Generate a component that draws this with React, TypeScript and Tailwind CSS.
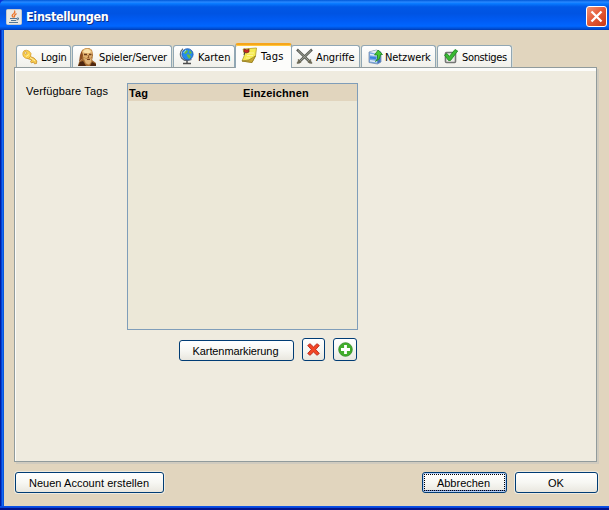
import React from 'react';

const ui = "font-['DejaVu_Sans_Condensed','DejaVu_Sans',sans-serif]";

function KeyIcon() {
  return (
    <svg width="16" height="16" viewBox="0 0 16 16">
      <path d="M7 7L12 9 14.800 12 14.500 14.500 12.500 14.800 11.500 13 9.500 14 8.500 12.500 9.800 11 5.500 9.500Z" fill="#f7cb4e" stroke="#c98f28" strokeWidth=".8" />
      <path d="M1 3.500Q1.500 1 4.500 1.200 7.500 1.500 9 4.500 9.300 8 6.500 9.500 3.500 10 1.500 7.500 .5 5.500 1 3.500Z" fill="#fcd250" stroke="#d49c2e" strokeWidth=".8" />
      <circle cx="3.700" cy="4" r="1.100" fill="#fff" stroke="#ba8626" strokeWidth=".6" />
      <path d="M4 7.500l3-2M8 8.500l5 3.300" stroke="#fff1a3" strokeWidth=".9" />
    </svg>
  );
}

function FaceIcon() {
  return (
    <svg width="18" height="18" viewBox="0 0 18 18">
      <path d="M0 18L1 14 4 11 3 6 4 2 8 0H11L14 2 15 7 14 12 18 15V18Z" fill="#a2672b" />
      <path d="M4 4Q5 0 9 .3 14 0 14.500 5L13 12 9 14 5 11Z" fill="#e1b16e" />
      <path d="M5 4Q6 1 10 1L13 3 12 5H7Z" fill="#fae1a7" />
      <path d="M6 6.500h3M11 6.500h2.500" stroke="#6a3a1a" strokeWidth="1.300" />
      <path d="M10 7l1 2.500H9.500" fill="none" stroke="#8c5226" />
      <path d="M5 9l3 1.500h4L14 9l-.5 5L11 17 7.500 15.500Z" fill="#e0b479" stroke="#ad7638" strokeWidth=".6" />
      <path d="M9 11.500h3" stroke="#74401d" />
      <path d="M3.500 3L5 7l-1 4-3 3 1-7Z" fill="#8b4b1e" />
      <path d="M0 18l2-4 3-1 3 5ZM12 18l2-4 4 2v2Z" fill="#4d260f" />
    </svg>
  );
}

function GlobeIcon() {
  return (
    <svg width="16" height="17" viewBox="0 0 16 17">
      <path d="M4 .8Q-.5 5 2.500 10 6 14 12.500 11.500" fill="none" stroke="#626b73" strokeWidth="1.200" />
      <path d="M8 12.500v2.500M4 15.500h8" stroke="#4d4d4d" strokeWidth="1.500" />
      <circle cx="8.500" cy="6.300" r="5.600" fill="#248bee" stroke="#1b50a8" strokeWidth=".8" />
      <path d="M6 3l2-1 1 1-1 2-2 1-1-1ZM8 6l3 1 1 2-2 2-2-3ZM11 2l2 3-2 1-1-2Z" fill="#65b94a" />
      <path d="M4.500 5L7 2" stroke="#8cd0ff" />
    </svg>
  );
}

function NoteIcon() {
  return (
    <svg width="17" height="17" viewBox="0 0 17 17">
      <path d="M2 2L15.500 1 14.500 9 11 15.500 1 14 3.500 8Z" fill="#f5eb51" stroke="#b19a29" strokeWidth=".8" />
      <path d="M1 14Q8 14.500 14.500 9L11 15.500Z" fill="#c9aa33" stroke="#8e7621" strokeWidth=".7" />
      <path d="M7 6h6M6 8.500h6M5 11h4" stroke="#fff59a" />
      <path d="M3 2l3 1 2-1v3l-3 1-2-1Z" fill="#ce2823" stroke="#701c1c" strokeWidth=".7" />
      <path d="M4 5l-1 3" stroke="#4a4a34" />
    </svg>
  );
}

function SwordsIcon() {
  return (
    <svg width="17" height="17" viewBox="0 0 17 17">
      <path d="M1 1.500L15 15M16 1.500L2 15" stroke="#5c5e58" strokeWidth="2.500" />
      <path d="M2 2.500L13 13M15 2.500L4 13" stroke="#a7ab9e" strokeWidth=".9" />
      <path d="M2 11.500l3 3M12 14.500l3-3M1 15.500l2-2M14 13.500l2 2" stroke="#716d57" strokeWidth="1.500" />
    </svg>
  );
}

function NetworkIcon() {
  return (
    <svg width="15" height="16" viewBox="0 0 15 16">
      <path d="M1 3L8.500 1 13 3V13L9.500 15 1 13.500Z" fill="#78a7e3" stroke="#7990ae" strokeWidth=".8" />
      <path d="M1.500 3L8.500 1.300 12.500 3 9 5Z" fill="#e6edf1" />
      <path d="M9.500 5l3-2v10l-3 1.500Z" fill="#416fb7" />
      <path d="M2 5.500l7 1M2 11.800l7 1" stroke="#e0ecfa" strokeWidth="1.500" />
      <path d="M2 8.500l6 .7" stroke="#3881df" strokeWidth="2" />
      <path d="M7.500 12.500Q10.500 10 9.500 6H6.500L10.200 1 14.500 5.500H12.500Q13 10 7.500 12.500Z" fill="#48c83a" stroke="#18851b" strokeWidth=".8" />
    </svg>
  );
}

function CheckIcon() {
  return (
    <svg width="14" height="15" viewBox="0 0 14 15">
      <rect x="1.500" y="3.500" width="10" height="10" rx="1" fill="#ecece9" stroke="#747674" strokeWidth="1.600" />
      <path d="M.5 6L3 4.500 5.300 7.500 11 .5 13.700 2 6.500 11.500H4.500Z" fill="#3ab932" stroke="#18851b" strokeWidth=".8" />
    </svg>
  );
}

function JavaIcon() {
  return (
    <svg width="16" height="16" viewBox="0 0 16 16">
      <rect x=".5" y=".5" width="15" height="15" rx="1" fill="#e9e9e5" stroke="#c4c7ca" />
      <path d="M7.500 8.500Q4.500 6.500 8 4.500 9.500 3 8.500 1.500M8.500 8.500Q7.500 6.500 10.500 4.500" fill="none" stroke="#eb7429" strokeWidth="1.300" />
      <path d="M4 9.500h7M5 11.500h5M3 13.500h9" stroke="#527796" strokeWidth="1.100" />
      <path d="M11 9h1.500q.5 2-2 2" fill="none" stroke="#527796" />
    </svg>
  );
}

function Tab({ icon, label, box, text }: { icon: React.ReactNode; label: string; box: string; text: string }) {
  return (
    <div className={`flex h-[22px] shrink-0 items-center rounded-t-[3px] border border-b-0 border-[#91a7b4] bg-linear-to-b from-white to-[#f0f0ea] shadow-[1px_0_#d8dcd4] ${box}`}>
      <span className="shrink-0">{icon}</span>
      <span className={`whitespace-nowrap pt-px leading-[15px] ${text}`}>{label}</span>
    </div>
  );
}

function Button({ children, className = '' }: { children: React.ReactNode; className?: string }) {
  return (
    <button className={`flex h-[21px] shrink-0 items-center justify-center whitespace-nowrap rounded-[3px] border border-[#003c74] bg-linear-to-b from-white via-[#f7f7f3] to-[#e9e7df] ${className}`}>
      {children}
    </button>
  );
}

const raised = 'shadow-[0_0_0_1px_#eeeae0]';

export default function App() {
  return (
    <div className={`flex h-[510px] w-[609px] flex-col overflow-hidden bg-[#0831d9] text-[11px] text-black ${ui}`}>
      <header className="flex h-[30px] shrink-0 items-center bg-[linear-gradient(180deg,#0058d8_0%,#2888ff_7%,#087aff_12%,#0058e6_23%,#0054e3_45%,#005cf5_70%,#0066ff_87%,#0049ca_97%,#0038b0_100%)] pl-[6px] pr-[2px] pt-[3px] [clip-path:polygon(4px_0,100%_0,100%_100%,0_100%,0_4px,1px_2px,2px_1px)]">
        <JavaIcon />
        <h1 className="ml-1 whitespace-nowrap pt-px text-[12.500px] font-bold leading-4 tracking-[-0.33px] text-white [text-shadow:1px_1px_#0c2f87]">Einstellungen</h1>
        <button className="ml-auto flex size-[21px] items-center justify-center rounded-[3px] border border-white bg-linear-to-br from-[#f09172] via-[#e35734] to-[#c93910]">
          <svg width="13" height="13" viewBox="0 0 13 13"><path d="M1.500 1.500l10 10M11.500 1.500l-10 10" stroke="white" strokeWidth="2.300" /></svg>
        </button>
      </header>

      <main className="flex h-[476px] shrink-0 bg-[#e1d5be]">
        <div className="w-1 shrink-0 bg-[linear-gradient(90deg,#001ea0_0_25%,#0441d8_25%_50%,#166aee_50%_75%,#0855dd_75%)]" />
        <div className="flex w-[605px] flex-col">
          <div className="flex h-[37px] shrink-0 items-end pl-3">
            <Tab icon={<KeyIcon />} label="Login" box="w-[55px] pl-[5px]" text="ml-[3px] tracking-[-0.25px]" />
            <Tab icon={<FaceIcon />} label="Spieler/Server" box="ml-px w-[100px] pl-[5px]" text="ml-[3px] tracking-[-0.15px]" />
            <Tab icon={<GlobeIcon />} label="Karten" box="ml-px w-[62px] pl-[5px]" text="ml-[3px] tracking-[-0.05px]" />
            <div className="z-10 -mb-px flex h-[25px] w-[57px] shrink-0 items-center rounded-t-[3px] border-x border-t-2 border-x-[#91a7b4] border-t-[#f6a51b] bg-[#fcfcfa] pb-[2px] pl-[5px] shadow-[inset_0_1px_#ffc73c]">
              <NoteIcon /><span className="ml-[3px] pt-px leading-[15px] tracking-[0.25px]">Tags</span>
            </div>
            <Tab icon={<SwordsIcon />} label="Angriffe" box="-ml-px w-[69px] pl-[4px]" text="ml-[3px] tracking-[-0.1px]" />
            <Tab icon={<NetworkIcon />} label="Netzwerk" box="ml-px w-[75px] pl-[6px]" text="ml-[2px] tracking-[-0.1px]" />
            <Tab icon={<CheckIcon />} label="Sonstiges" box="ml-px w-[75px] pl-[6px]" text="ml-[4px] tracking-[-0.35px]" />
          </div>

          <section className="ml-[10px] h-[395px] w-[583px] shrink-0 border border-[#919b9c] bg-[#efebdf] pl-[11px] shadow-[inset_0_3px_#fcfcfa,inset_1px_0_#fcfcfa,2px_2px_#d0cbbf]">
            <div className="flex pt-[15px]">
              <span className="w-[101px] shrink-0 font-['Liberation_Sans',sans-serif] leading-4 tracking-[0.15px]">Verfügbare Tags</span>
              <div className="h-[247px] w-[231px] border border-[#7f9db9] bg-[#ece8d8]">
                <div className="flex h-[17px] items-center bg-[#e1d5be] font-['Liberation_Sans',sans-serif] font-bold leading-4 tracking-[0.15px]">
                  <span className="w-[115px] pl-px">Tag</span><span>Einzeichnen</span>
                </div>
              </div>
            </div>
            <div className="mt-[8px] flex items-end pl-[153px] font-['Liberation_Sans',sans-serif]">
              <Button className={`w-[115px] tracking-[-0.1px] ${raised}`}><span className="pt-px pr-[2px]">Kartenmarkierung</span></Button>
              <Button className={`ml-2 h-[23px] w-[23px] ${raised}`}>
                <svg width="13" height="13" viewBox="0 0 13 13"><path d="M.7 2.500L3 .7 6.500 4 10 .7 12.300 2.500 8.700 6.500 12.300 10.500 10 12.300 6.500 9 3 12.300 .7 10.500 4.300 6.500Z" fill="#f24625" stroke="#b9251a" strokeWidth=".9" /></svg>
              </Button>
              <Button className={`ml-2 h-[23px] w-[24px] ${raised}`}>
                <svg width="15" height="15" viewBox="0 0 15 15"><circle cx="7.500" cy="7.500" r="6.800" fill="#41ad2b" stroke="#318b24" strokeWidth=".8" /><path d="M7.500 3v9M3 7.500h9" stroke="white" strokeWidth="2.800" /></svg>
              </Button>
            </div>
          </section>

          <footer className="flex pl-[11px] pt-[10px] font-['Liberation_Sans',sans-serif]">
            <Button className={`w-[149px] ${raised}`}><span className="pt-px pr-px tracking-[0.04px]">Neuen Account erstellen</span></Button>
            <Button className="ml-[258px] w-[85px] p-px shadow-[inset_0_0_0_1px_#b7cef2,inset_0_-2px_#6983cc]">
              <span className="flex h-[17px] w-full items-center justify-center border border-dotted border-black pr-[2px] pt-px">Abbrechen</span>
            </Button>
            <Button className={`ml-2 w-[83px] ${raised}`}><span className="pr-px pt-px">OK</span></Button>
          </footer>
        </div>
      </main>
      <div className="h-1 shrink-0 bg-[linear-gradient(180deg,#0855ee_0%,#0841d5_50%,#00138c_51%)]" />
    </div>
  );
}
